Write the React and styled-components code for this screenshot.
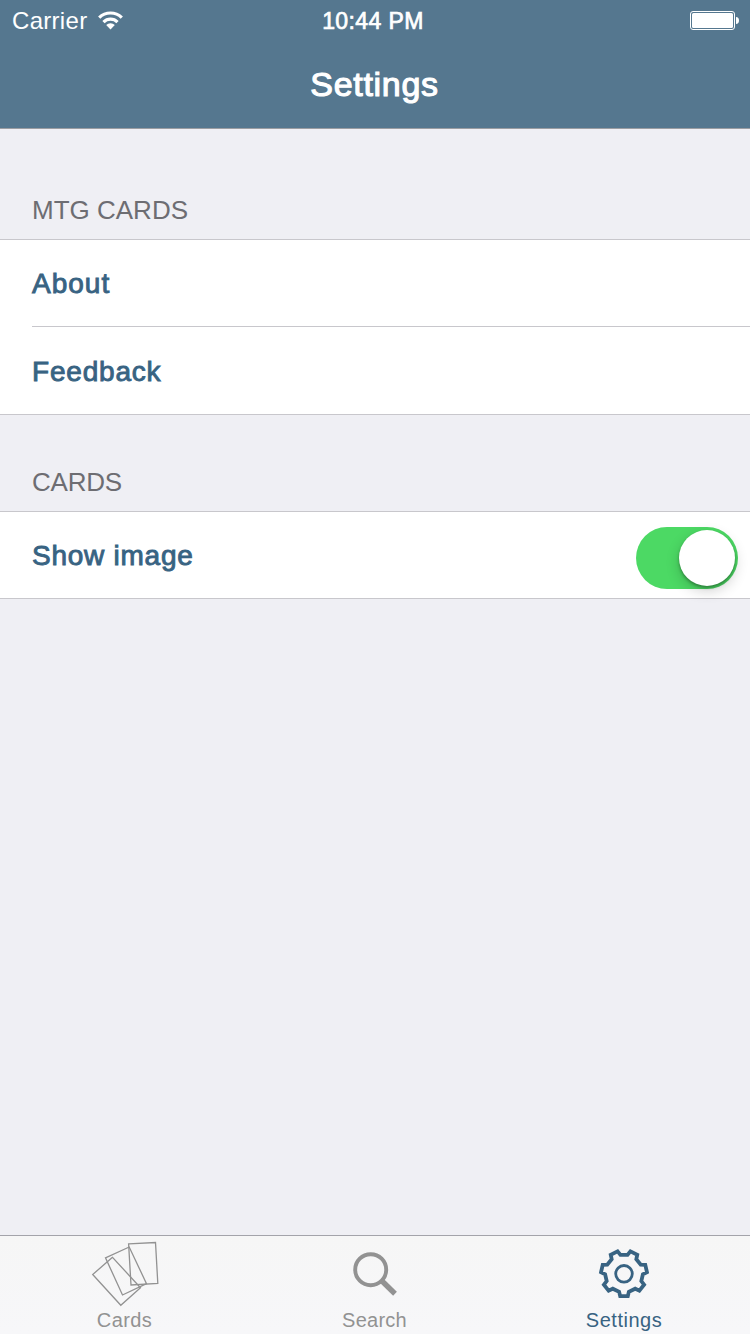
import React from "react";
import styled, { createGlobalStyle } from "styled-components";

const GlobalStyle = createGlobalStyle`
  * { box-sizing: border-box; }
  body {
    margin: 0;
    background: #efeff4;
    font-family: "Liberation Sans", Arial, sans-serif;
    -webkit-font-smoothing: antialiased;
  }
`;

const Screen = styled.div`
  width: 750px;
  height: 1334px;
  display: flex;
  flex-direction: column;
  background: #efeff4;
  overflow: hidden;
`;

const Header = styled.header`
  height: 129px;
  background: #55778f;
  border-bottom: 1px solid #9b9da2;
  color: #fff;
`;

const StatusBar = styled.div`
  height: 40px;
  display: grid;
  grid-template-columns: 1fr auto 1fr;
  align-items: center;
  padding: 2px 11px 0 12px;
  font-size: 24px;
  line-height: 38px;
`;

const Label = styled.span`
  display: inline-block;
  white-space: nowrap;
  letter-spacing: ${(p) => p.$spacing || 0}px;
  -webkit-text-stroke: ${(p) => p.$weight || 0}px currentColor;
`;

const StatusLeft = styled.div`
  display: flex;
  align-items: center;
  gap: 11px;
`;

const Clock = styled.div`
  font-size: 23px;
  padding-right: 5px;
`;

const StatusRight = styled.div`
  display: flex;
  justify-content: flex-end;
`;

const Title = styled.h1`
  margin: 0;
  height: 88px;
  line-height: 88px;
  font-size: 34px;
  font-weight: 400;
  text-align: center;
  padding-right: 1px;
`;

const Content = styled.main`
  flex: 1;
`;

const SectionHeader = styled.h2`
  margin: 0;
  height: ${(p) => p.$height}px;
  display: flex;
  align-items: flex-end;
  padding: 0 32px 14px;
  color: #6d6d72;
  font-size: 26px;
  line-height: 30px;
  font-weight: 400;
`;

const Group = styled.section`
  background: #fff;
  border-top: 1px solid #c8c7cc;
  border-bottom: 1px solid #c8c7cc;
  padding-left: 32px;
`;

const Row = styled.div`
  height: ${(p) => p.$height || 86}px;
  display: flex;
  align-items: center;
  justify-content: space-between;
  padding: 2px 12px 0 0;
  color: #386382;
  font-size: 28px;
  line-height: 32px;

  & + & {
    border-top: 1px solid #c8c7cc;
  }
`;

const Switch = styled.div`
  width: 102px;
  height: 62px;
  margin-top: 4px;
  padding: 3px;
  border-radius: 31px;
  background: #4cd964;
  display: flex;
  justify-content: flex-end;
`;

const Knob = styled.div`
  width: 56px;
  height: 56px;
  border-radius: 50%;
  background: #fff;
  box-shadow: 0 5px 14px rgba(0, 0, 0, 0.19), 0 2px 3px rgba(0, 0, 0, 0.3);
`;

const TabBar = styled.nav`
  height: 99px;
  display: grid;
  grid-template-columns: 249px 251px 248px;
  border-top: 1px solid #a3a3aa;
  background: linear-gradient(#f6f6f6, #f7f7f9);
`;

const Tab = styled.div`
  display: flex;
  flex-direction: column;
  align-items: center;
  color: ${(p) => (p.$active ? "#386382" : "#929292")};
  font-size: 20px;
  line-height: 24px;
`;

const TabIcon = styled.svg`
  width: 100px;
  height: 72px;
  display: block;
`;

const WifiIcon = () => (
  <svg width="26" height="20" viewBox="0 0 26 20" fill="none" stroke="#fff">
    <path d="M1.2 6.6A16.2 16.2 0 0 1 23.8 6.6" strokeWidth="3.2" />
    <path d="M5.5 11.1A9.9 9.9 0 0 1 19.5 11.1" strokeWidth="3.2" />
    <path d="M8.2 14A6 6 0 0 1 16.8 14L12.5 18.4Z" fill="#fff" stroke="none" />
  </svg>
);

const BatteryIcon = () => (
  <svg width="49" height="20" viewBox="0 0 49 20">
    <rect x="0.5" y="0.5" width="44" height="18" rx="2.5" fill="none" stroke="#fff" />
    <rect x="2" y="2" width="41" height="15" rx="1.5" fill="#fff" />
    <path d="M46 6C48 6.2 49 7.2 49 9.5S48 12.8 46 13Z" fill="#fff" />
  </svg>
);

const TEETH = 7;
const polar = (r, deg) => {
  const a = (deg * Math.PI) / 180;
  return `${(50 + r * Math.cos(a)).toFixed(2)},${(37.5 + r * Math.sin(a)).toFixed(2)}`;
};
const gearPoints = Array.from({ length: TEETH }, (_, i) => {
  const mid = 90 + (i * 360) / TEETH;
  return [polar(18.9, mid - 15), polar(23, mid - 9.5), polar(23, mid + 9.5), polar(18.9, mid + 15)].join(" ");
}).join(" ");

const CardsIcon = () => (
  <TabIcon viewBox="0 0 100 72" fill="none" stroke="#929292" strokeWidth="1.3">
    <path d="M37.5 21.3L17.7 38.5L45.8 69.3L65.5 51.8Z" />
    <path d="M30.5 21.8L54.2 11L71.5 47.7L47.5 59Z" />
    <path d="M53.6 7.8L80.5 6.5L82.8 47.3L56 49Z" />
  </TabIcon>
);

const SearchIcon = () => (
  <TabIcon viewBox="0 0 100 72" fill="none" stroke="#929292">
    <circle cx="45.7" cy="33.7" r="15.5" strokeWidth="3.9" />
    <path d="M56.2 44.3L70 57.7" strokeWidth="5.4" />
  </TabIcon>
);

const GearIcon = () => (
  <TabIcon viewBox="0 0 100 72" fill="none" stroke="#386382">
    <polygon points={gearPoints} strokeWidth="3.8" />
    <circle cx="50" cy="37.8" r="8.3" strokeWidth="2.8" />
  </TabIcon>
);

export default function App() {
  return (
    <>
      <GlobalStyle />
      <Screen>
        <Header>
          <StatusBar>
            <StatusLeft>
              <Label $spacing={0.3}>Carrier</Label>
              <WifiIcon />
            </StatusLeft>
            <Clock>
              <Label $weight={0.7} $spacing={0.4}>10:44 PM</Label>
            </Clock>
            <StatusRight>
              <BatteryIcon />
            </StatusRight>
          </StatusBar>
          <Title>
            <Label $weight={1.1} $spacing={0.7}>Settings</Label>
          </Title>
        </Header>
        <Content>
          <SectionHeader $height={110}>
            <Label>MTG CARDS</Label>
          </SectionHeader>
          <Group>
            <Row>
              <Label $weight={0.9} $spacing={1}>About</Label>
            </Row>
            <Row $height={88}>
              <Label $weight={0.9} $spacing={0.8}>Feedback</Label>
            </Row>
          </Group>
          <SectionHeader $height={96}>
            <Label $spacing={-0.2}>CARDS</Label>
          </SectionHeader>
          <Group>
            <Row>
              <Label $weight={0.9} $spacing={0.75}>Show image</Label>
              <Switch role="switch" aria-checked="true">
                <Knob />
              </Switch>
            </Row>
          </Group>
        </Content>
        <TabBar>
          <Tab>
            <CardsIcon />
            <Label $spacing={0.4}>Cards</Label>
          </Tab>
          <Tab>
            <SearchIcon />
            <Label $spacing={0.25}>Search</Label>
          </Tab>
          <Tab $active>
            <GearIcon />
            <Label $spacing={0.5}>Settings</Label>
          </Tab>
        </TabBar>
      </Screen>
    </>
  );
}
